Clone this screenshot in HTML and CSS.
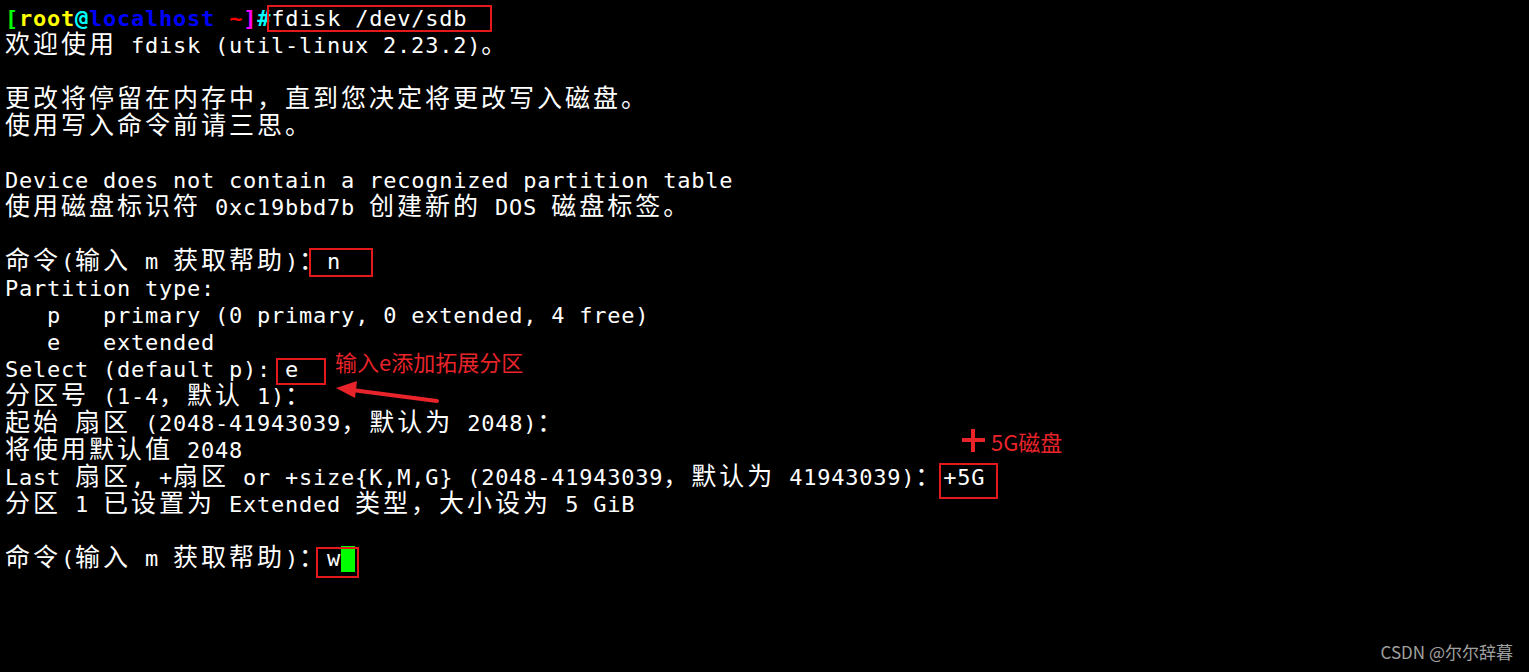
FILE: index.html
```html
<!DOCTYPE html>
<html lang="zh-CN">
<head>
  <meta charset="UTF-8">
  <title>fdisk /dev/sdb</title>
  <link rel="stylesheet" href="styles.css">
</head>
<body>
  <div class="screen">
    <div class="term">
      <div class="line prompt"><span class="g">[</span><span class="y">root</span><span class="c">@</span><span class="b">localhost</span> <span class="r">~</span><span class="m">]</span><span class="c">#</span><span class="cmd">fdisk /dev/sdb</span></div>
      <div class="line"><span class="w">欢迎使用</span> fdisk (util-linux 2.23.2)<span class="w">。</span></div>
      <div class="line"></div>
      <div class="line"><span class="w">更改将停留在内存中，直到您决定将更改写入磁盘。</span></div>
      <div class="line"><span class="w">使用写入命令前请三思。</span></div>
      <div class="line"></div>
      <div class="line">Device does not contain a recognized partition table</div>
      <div class="line"><span class="w">使用磁盘标识符</span> 0xc19bbd7b <span class="w">创建新的</span> DOS <span class="w">磁盘标签。</span></div>
      <div class="line"></div>
      <div class="line"><span class="w">命令</span>(<span class="w">输入</span> m <span class="w">获取帮助</span>)<span class="w">：</span>n</div>
      <div class="line">Partition type:</div>
      <div class="line">   p   primary (0 primary, 0 extended, 4 free)</div>
      <div class="line">   e   extended</div>
      <div class="line">Select (default p): e</div>
      <div class="line"><span class="w">分区号</span> (1-4<span class="w">，默认</span> 1)<span class="w">：</span></div>
      <div class="line"><span class="w">起始</span> <span class="w">扇区</span> (2048-41943039<span class="w">，默认为</span> 2048)<span class="w">：</span></div>
      <div class="line"><span class="w">将使用默认值</span> 2048</div>
      <div class="line">Last <span class="w">扇区</span>, +<span class="w">扇区</span> or +size{K,M,G} (2048-41943039<span class="w">，默认为</span> 41943039)<span class="w">：</span>+5G</div>
      <div class="line"><span class="w">分区</span> 1 <span class="w">已设置为</span> Extended <span class="w">类型，大小设为</span> 5 GiB</div>
      <div class="line"></div>
      <div class="line"><span class="w">命令</span>(<span class="w">输入</span> m <span class="w">获取帮助</span>)<span class="w">：</span>w<span class="cursor"></span></div>
    </div>

    <!-- red markup drawn over the screenshot -->
    <div class="mark box-cmd"></div>
    <div class="mark box-n"></div>
    <div class="mark box-e"></div>
    <div class="mark box-5g"></div>
    <div class="mark box-w"></div>

    <div class="note note-e">输入e添加拓展分区</div>
    <svg class="arrow" width="120" height="40" viewBox="330 375 120 40">
      <line x1="437" y1="401" x2="352" y2="390" stroke="#e8232a" stroke-width="4" stroke-linecap="round"/>
      <polygon points="336,388 357,381 355,398" fill="#e8232a"/>
    </svg>

    <div class="note note-5g">
      <svg class="plus" width="24" height="24" viewBox="0 0 24 24">
        <rect x="0" y="9" width="23" height="4" fill="#e8232a"/>
        <rect x="9" y="0" width="4" height="23" fill="#e8232a"/>
      </svg>
      <span>5G磁盘</span>
    </div>

    <div class="watermark">CSDN @尔尔辞暮</div>
  </div>
</body>
</html>
```

FILE: styles.css
```css
html, body {
  margin: 0;
  background: #000;
}
.screen {
  position: relative;
  width: 1529px;
  height: 672px;
  overflow: hidden;
  background: #000;
}
.term {
  padding: 5px 0 0 5px;
  font-family: "DejaVu Sans Mono", monospace;
  font-size: 22px;
  letter-spacing: 0.76px;
  color: #fff;
}
.line {
  height: 27px;
  line-height: 27px;
  white-space: pre;
}
/* double-width cells for CJK glyphs, kept off the line box */
.w {
  font-family: "Noto Sans CJK SC", sans-serif;
  font-size: 25px;
  letter-spacing: 3px;
  line-height: 0;
}
.prompt .g, .prompt .y, .prompt .c, .prompt .b, .prompt .r, .prompt .m {
  font-weight: bold;
}
.g { color: #00ff00; }
.y { color: #ffff00; }
.c { color: #00ffff; }
.b { color: #0000ff; }
.r { color: #ff0000; }
.m { color: #ff00ff; }
.cursor {
  display: inline-block;
  width: 14px;
  height: 26px;
  vertical-align: -6px;
  background: #00ff00;
}

.mark {
  position: absolute;
  box-sizing: border-box;
  border: 2px solid #e5191c;
}
.box-cmd { left: 267px; top: 5px; width: 225px; height: 27px; }
.box-n { left: 309px; top: 248px; width: 64px; height: 29px; }
.box-e { left: 276px; top: 358px; width: 50px; height: 27px; }
.box-5g { left: 939px; top: 463px; width: 59px; height: 36px; }
.box-w { left: 316px; top: 547px; width: 43px; height: 31px; }

.note {
  position: absolute;
  font-family: "Noto Sans CJK SC", sans-serif;
  color: #e8232a;
  white-space: nowrap;
}
.note-e {
  left: 335px;
  top: 348px;
  font-size: 22px;
  line-height: 26px;
}
.arrow {
  position: absolute;
  left: 330px;
  top: 375px;
}
.note-5g {
  left: 962px;
  top: 428px;
  display: flex;
  align-items: center;
  gap: 5px;
  font-size: 22px;
  line-height: 26px;
}
.watermark {
  position: absolute;
  right: 16px;
  bottom: 8px;
  font-family: "Noto Sans CJK SC", sans-serif;
  font-size: 17px;
  color: #a0a0a0;
}
```
